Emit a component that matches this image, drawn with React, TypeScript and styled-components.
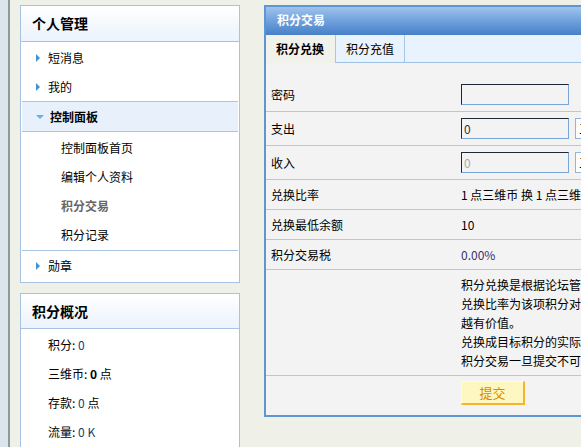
import styled, { createGlobalStyle } from "styled-components";

const GlobalStyle = createGlobalStyle`
    html, body {
        margin: 0;
        padding: 0;
        overflow: hidden;
        background: #eff1e8;
    }
    body {
        font-family: "Noto Sans CJK SC", "Noto Sans", sans-serif;
        font-size: 12px;
        color: #000;
    }
`

type MenuItem = { label: string, active?: boolean }

const subMenu: MenuItem[] = [
    {label: "控制面板首页"},
    {label: "编辑个人资料"},
    {label: "积分交易", active: true},
    {label: "积分记录"},
]

const description = [
    "积分兑换是根据论坛管理员设定的兑换比率，将自己的某项积分兑换为其他积分。",
    "兑换比率为该项积分对应一个单位标准积分的值，值越大，则该项积分",
    "越有价值。",
    "兑换成目标积分的实际数额将扣除积分交易税。",
    "积分交易一旦提交不可撤销，请慎重操作。",
]

const App = () => {
    return <>
        <GlobalStyle/>
        <Page>
            <SideStrip/>
            <Sidebar>
                <Box>
                    <BoxHeader>个人管理</BoxHeader>
                    <MenuList>
                        <MenuRow><RightArrow/>短消息</MenuRow>
                        <MenuRow><RightArrow/>我的</MenuRow>
                        <ActiveSection>
                            <MenuRow $bold><DownArrow/>控制面板</MenuRow>
                        </ActiveSection>
                        <SubList>
                            {subMenu.map(item =>
                                <SubRow key={item.label} $active={item.active}>{item.label}</SubRow>
                            )}
                        </SubList>
                        <MenuRow><RightArrow/>勋章</MenuRow>
                    </MenuList>
                </Box>
                <Box>
                    <BoxHeader $short>积分概况</BoxHeader>
                    <StatList>
                        <StatRow>积分: <Value>0</Value></StatRow>
                        <StatRow>三维币: <Value $bold>0</Value> 点</StatRow>
                        <StatRow>存款: <Value>0</Value> 点</StatRow>
                        <StatRow>流量: <Value>0 K</Value></StatRow>
                    </StatList>
                </Box>
            </Sidebar>
            <MainPanel>
                <PanelTitle>积分交易</PanelTitle>
                <TabBar>
                    <Tab $active>积分兑换</Tab>
                    <Tab>积分充值</Tab>
                </TabBar>
                <Content>
                    <FormRow $tall>
                        <Label>密码</Label>
                        <Field><TextInput/></Field>
                    </FormRow>
                    <FormRow $tall>
                        <Label>支出</Label>
                        <Field>
                            <TextInput>0</TextInput>
                            <SelectBox>三维币</SelectBox>
                        </Field>
                    </FormRow>
                    <FormRow $tall>
                        <Label>收入</Label>
                        <Field>
                            <TextInput $disabled>0</TextInput>
                            <SelectBox>三维币</SelectBox>
                        </Field>
                    </FormRow>
                    <FormRow>
                        <Label>兑换比率</Label>
                        <Field>1 点三维币 换 1 点三维币</Field>
                    </FormRow>
                    <FormRow>
                        <Label>兑换最低余额</Label>
                        <Field>10</Field>
                    </FormRow>
                    <FormRow>
                        <Label>积分交易税</Label>
                        <Field $tone="#3a2f6e">0.00%</Field>
                    </FormRow>
                    <NoteRow>
                        <Label/>
                        <NoteText>
                            {description.map(line => <NoteLine key={line}>{line}</NoteLine>)}
                        </NoteText>
                    </NoteRow>
                    <SubmitRow>
                        <Label/>
                        <SubmitButton>提交</SubmitButton>
                    </SubmitRow>
                </Content>
            </MainPanel>
        </Page>
    </>
}

const Page = styled.div`
    display: flex;
    align-items: flex-start;
    width: 900px;
    height: 447px;
`

const SideStrip = styled.div`
    flex-shrink: 0;
    width: 8px;
    height: 100%;
    background: #dbe3ec;
    border-right: 2px solid #8e969e;
`

const Sidebar = styled.div`
    flex-shrink: 0;
    width: 220px;
    margin: 5px 0 0 10px;
    display: flex;
    flex-direction: column;
    gap: 10px;
`

const Box = styled.div`
    background: #fff;
    border: 1px solid #a6c4e2;
`

const BoxHeader = styled.div<{ $short?: boolean }>`
    height: ${props => props.$short ? 34 : 35}px;
    line-height: ${props => props.$short ? 34 : 35}px;
    padding-left: 11px;
    font-size: 14px;
    font-weight: bold;
    background: linear-gradient(#ffffff, #ebf3fc);
    border-bottom: 1px solid #a6c4e2;
`

const MenuList = styled.div`
    padding: 1px 1px 2px;
`

const MenuRow = styled.div<{ $bold?: boolean }>`
    height: 29px;
    display: flex;
    align-items: center;
    padding-left: 14px;
    font-weight: ${props => props.$bold ? "bold" : "normal"};
`

const RightArrow = styled.span`
    width: 0;
    height: 0;
    margin-right: 8px;
    border-top: 4px solid transparent;
    border-bottom: 4px solid transparent;
    border-left: 4px solid #3b93d9;
`

const DownArrow = styled.span`
    width: 0;
    height: 0;
    margin-right: 6px;
    border-left: 4px solid transparent;
    border-right: 4px solid transparent;
    border-top: 4px solid #6aaee6;
`

const ActiveSection = styled.div`
    background: #e8f1fb;
    border-top: 1px solid #a9c7e3;
    border-bottom: 1px solid #a9c7e3;
`

const SubList = styled.div`
    padding: 1px 0;
    border-bottom: 1px solid #a9c7e3;
`

const SubRow = styled.div<{ $active?: boolean }>`
    height: 29px;
    line-height: 29px;
    padding-left: 39px;
    color: ${props => props.$active ? "#666" : "#000"};
    font-weight: ${props => props.$active ? "bold" : "normal"};
`

const StatList = styled.div`
    padding: 1px 0 6px;
`

const StatRow = styled.div`
    height: 29px;
    line-height: 29px;
    padding-left: 27px;
`

const Value = styled.span<{ $bold?: boolean }>`
    color: ${props => props.$bold ? "#000" : "#1d3c6e"};
    font-weight: ${props => props.$bold ? "bold" : "normal"};
`

const MainPanel = styled.div`
    flex-shrink: 0;
    width: 560px;
    margin: 5px 0 0 24px;
    border: 2px solid #5f95d0;
    background: #f3f3f3;
`

const PanelTitle = styled.div`
    height: 28px;
    line-height: 26px;
    padding-left: 11px;
    color: #fff;
    font-weight: bold;
    background: linear-gradient(#9fc3ec, #6a9ddb 55%, #4880c7);
`

const TabBar = styled.div`
    display: flex;
    height: 27px;
    background: #e9f3fd;
    border-bottom: 1px solid #9dc0e3;
`

const Tab = styled.div<{ $active?: boolean }>`
    height: ${props => props.$active ? 28 : 27}px;
    line-height: 27px;
    padding: 0 ${props => props.$active ? 11 : 10}px 0 10px;
    border-right: 1px solid #a9c7e3;
    font-weight: ${props => props.$active ? "bold" : "normal"};
    background: ${props => props.$active ? "#f1f2ec" : "transparent"};
`

const Content = styled.div`
    padding-top: 15px;
`

const FormRow = styled.div<{ $tall?: boolean }>`
    display: flex;
    align-items: center;
    height: ${props => props.$tall ? 33 : 29}px;
    border-bottom: 1px solid #b1cae4;
`

const Label = styled.div`
    flex-shrink: 0;
    width: 190px;
    padding-left: 5px;
`

const Field = styled.div<{ $tone?: string }>`
    display: flex;
    align-items: center;
    color: ${props => props.$tone ?? "#000"};
    white-space: nowrap;
`

const TextInput = styled.div<{ $disabled?: boolean }>`
    box-sizing: border-box;
    width: 108px;
    height: 21px;
    line-height: 19px;
    padding-left: 2px;
    color: ${props => props.$disabled ? "#aaa" : "#333"};
    border: 1px solid;
    border-color: #1d2836 #78a6d8 #78a6d8 #1d2836;
`

const SelectBox = styled.div`
    box-sizing: border-box;
    width: 80px;
    height: 21px;
    line-height: 19px;
    margin-left: 6px;
    padding-left: 3px;
    background: #fff;
    border: 1px solid #8fb4de;
`

const NoteRow = styled.div`
    display: flex;
    padding: 5px 0;
    border-bottom: 1px solid #b1cae4;
`

const NoteText = styled.div`
    line-height: 19px;
    white-space: nowrap;
`

const NoteLine = styled.div`
    height: 19px;
`

const SubmitRow = styled.div`
    display: flex;
    padding: 5px 0 10px;
`

const SubmitButton = styled.button`
    box-sizing: border-box;
    width: 64px;
    height: 24px;
    padding: 0;
    font-family: inherit;
    font-size: 13px;
    color: #d88b00;
    background: #fff7c2;
    border-style: solid;
    border-width: 1px 2px 2px 1px;
    border-color: #fffbe8 #f5b42d #f5b42d #fffbe8;
    cursor: pointer;
`

export default App
